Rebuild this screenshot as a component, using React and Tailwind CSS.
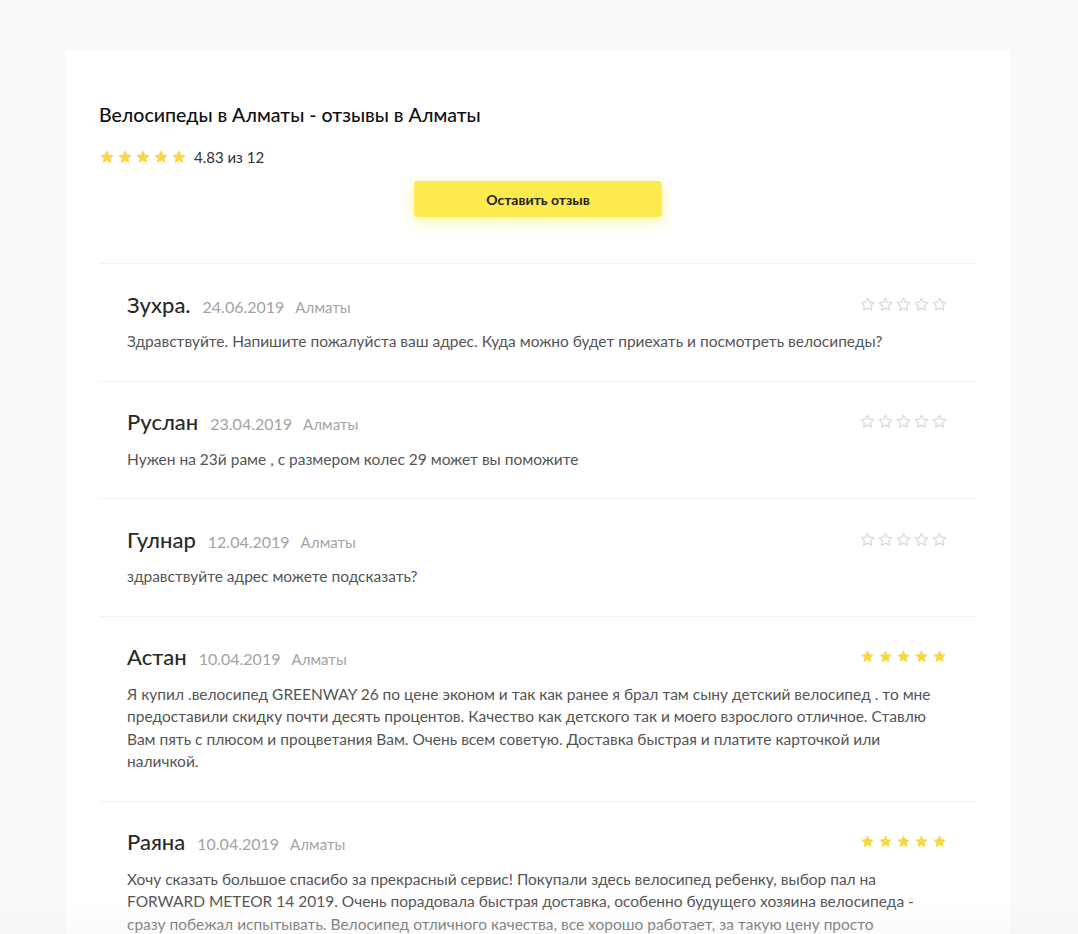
import React from "react";

const STAR = "M12 2l3.09 6.26L22 9.27l-5 4.87 1.18 6.88L12 17.77l-6.18 3.25L7 14.14 2 9.27l6.91-1.01L12 2z";

const Stars = ({ filled, size = 15, gap = "gap-[3px]" }) => (
  <div className={`flex items-center ${gap}`}>
    {[0, 1, 2, 3, 4].map((i) => (
      <svg key={i} width={size} height={size} viewBox="0 0 24 24">
        {filled ? (
          <path d={STAR} fill="#f9d648" />
        ) : (
          <path d={STAR} fill="none" stroke="#d9d9d9" strokeWidth="2" strokeLinejoin="round" />
        )}
      </svg>
    ))}
  </div>
);

const reviews = [
  {
    name: "Зухра.",
    date: "24.06.2019",
    rated: false,
    text: "Здравствуйте. Напишите пожалуйста ваш адрес. Куда можно будет приехать и посмотреть велосипеды?",
  },
  {
    name: "Руслан",
    date: "23.04.2019",
    rated: false,
    text: "Нужен на 23й раме , с размером колес 29 может вы поможите",
  },
  {
    name: "Гулнар",
    date: "12.04.2019",
    rated: false,
    text: "здравствуйте адрес можете подсказать?",
  },
  {
    name: "Астан",
    date: "10.04.2019",
    rated: true,
    text: "Я купил .велосипед GREENWAY 26 по цене эконом и так как ранее я брал там сыну детский велосипед . то мне предоставили скидку почти десять процентов. Качество как детского так и моего взрослого отличное. Ставлю Вам пять с плюсом и процветания Вам. Очень всем советую. Доставка быстрая и платите карточкой или наличкой.",
  },
  {
    name: "Раяна",
    date: "10.04.2019",
    rated: true,
    text: "Хочу сказать большое спасибо за прекрасный сервис! Покупали здесь велосипед ребенку, выбор пал на FORWARD METEOR 14 2019. Очень порадовала быстрая доставка, особенно будущего хозяина велосипеда - сразу побежал испытывать. Велосипед отличного качества, все хорошо работает, за такую цену просто великолепно! Рекомендую всем.",
  },
];

const App = () => {
  return (
    <div
      className="min-h-screen bg-[#f9f9f9] pt-[50px]"
      style={{ fontFamily: "Lato, 'Noto Sans', sans-serif" }}
    >
      <div className="ml-[66px] w-[944px] bg-white px-[33px] pt-[53px] pb-10">
        <h1 className="text-[19.5px] leading-6 font-medium text-[#111]">
          Велосипеды в Алматы - отзывы в Алматы
        </h1>
        <div className="mt-5 flex h-5 items-center gap-[7px]">
          <Stars filled size={16} gap="gap-[2px]" />
          <span className="text-[15px] text-[#333]">4.83 из 12</span>
        </div>
        <div className="mt-[14px] flex justify-center">
          <button className="h-9 w-[248px] rounded-[4px] bg-[#fcea4f] text-[14px] font-bold text-[#222] shadow-[0_4px_14px_rgba(252,234,79,0.55)]">
            Оставить отзыв
          </button>
        </div>
        <div className="mt-[46px]">
          {reviews.map((r) => (
            <div key={r.name} className="border-t border-[#f1f1f1] pl-7 pr-[30px] pt-[26px] pb-[28px]">
              <div className="flex h-7 items-center justify-between">
                <div className="flex items-baseline">
                  <span className="text-[22px] font-medium text-[#2a2a2a]">{r.name}</span>
                  <span className="ml-3 text-[16px] text-[#a3a3a3]">{r.date}</span>
                  <span className="ml-[11px] text-[15px] text-[#a3a3a3]">Алматы</span>
                </div>
                <Stars filled={r.rated} size={15} gap="gap-[3px]" />
              </div>
              <p className="mt-3 text-[15.5px] leading-[22.5px] text-[#555]">{r.text}</p>
            </div>
          ))}
        </div>
      </div>
      <div className="pointer-events-none fixed bottom-0 left-0 right-0 h-8 bg-gradient-to-b from-transparent to-[#f4f4f4]/40" />
    </div>
  );
};

export default App;
